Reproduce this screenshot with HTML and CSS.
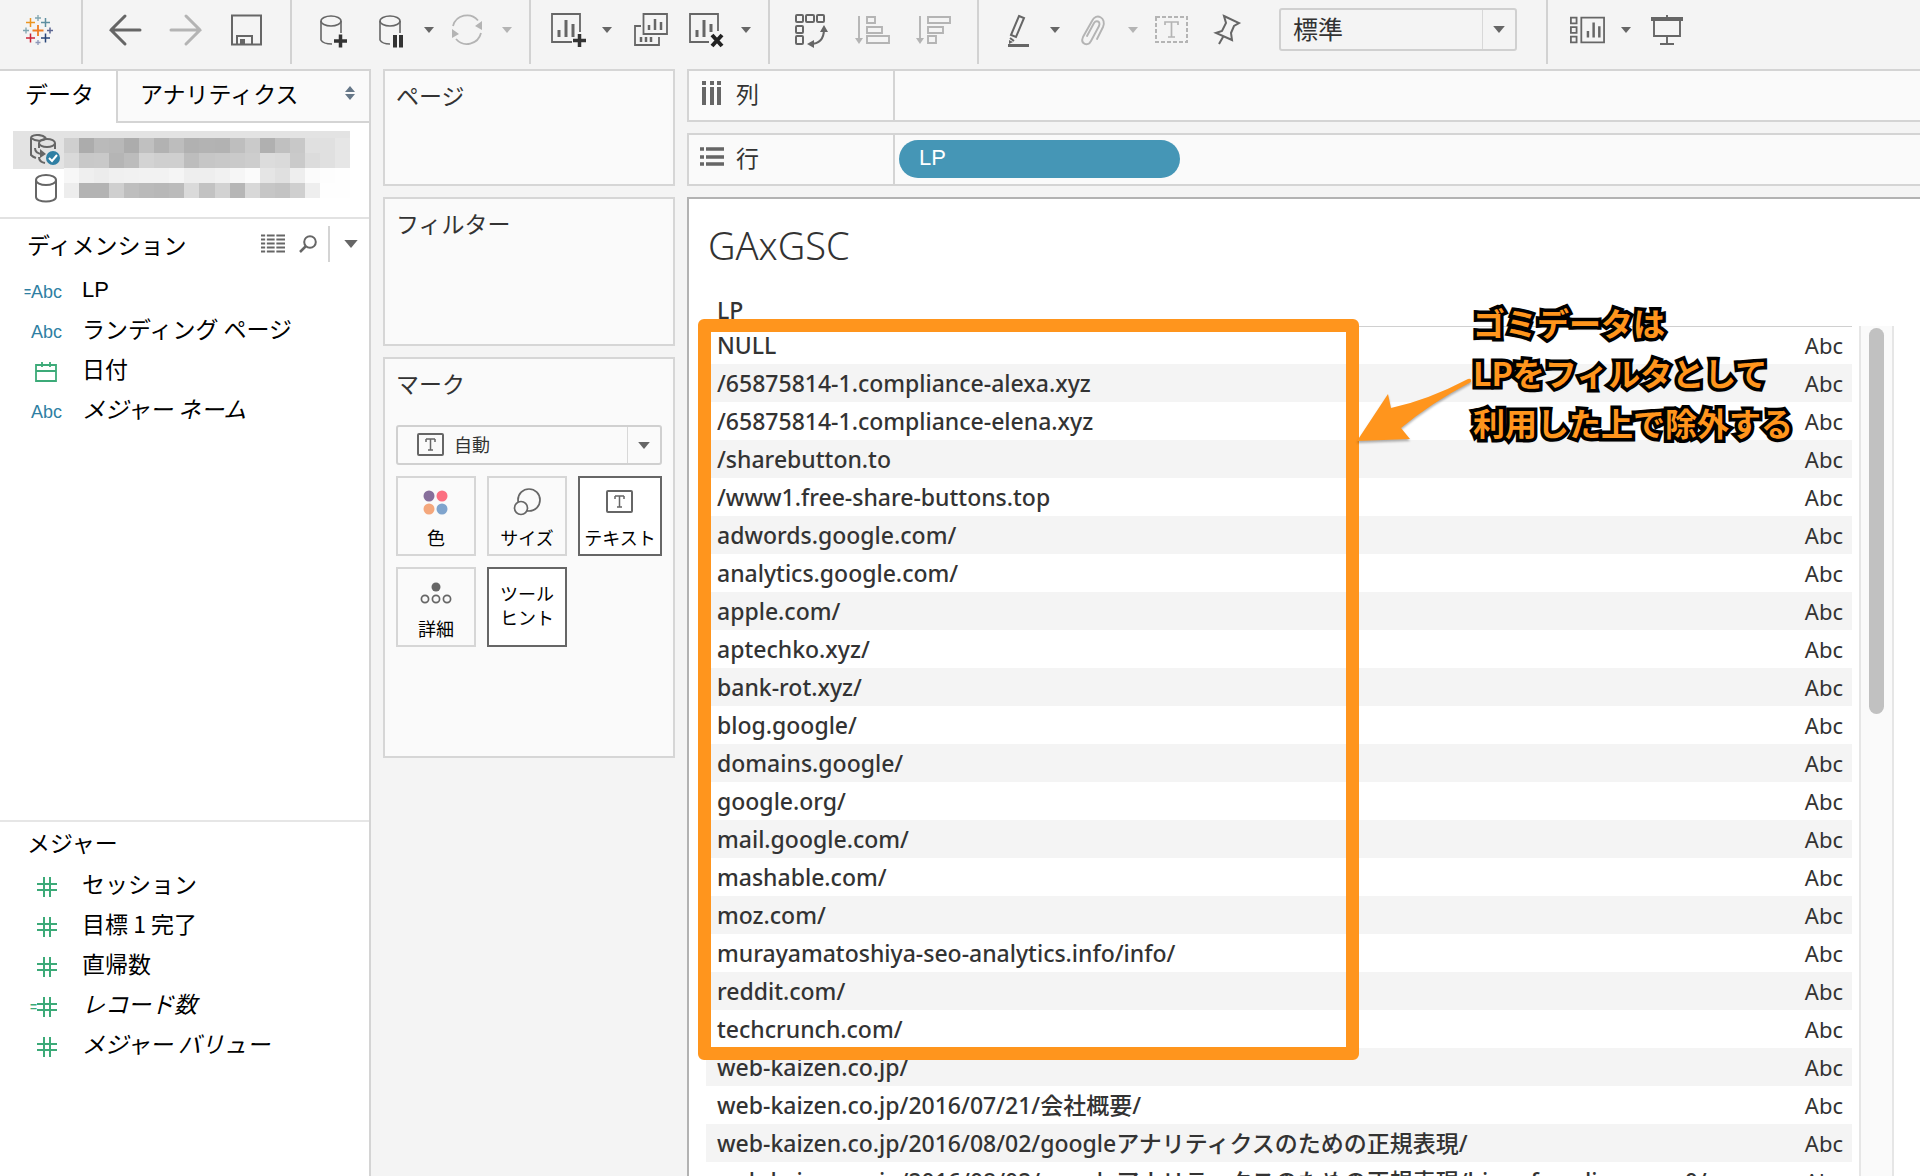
FILE: index.html
```html
<!DOCTYPE html>
<html lang="ja">
<head>
<meta charset="utf-8">
<title>GAxGSC</title>
<link rel="stylesheet" href="styles.css">
</head>
<body>
<svg class="sprite" aria-hidden="true">
  <symbol id="caret" viewBox="0 0 10 6"><path d="M0 0h10L5 6z" fill="currentColor"/></symbol>
  <symbol id="abc-t" viewBox="0 0 27 24"><rect x="1" y="1" width="25" height="21" rx="1" fill="none" stroke="currentColor" stroke-width="2"/><path d="M9 6h9M13.500 6v11M11 17h5M9 6v3M18 6v3" fill="none" stroke="currentColor" stroke-width="1.500"/></symbol>
  <symbol id="hash" viewBox="0 0 20 20"><path d="M7 0v20M13 0v20M0 7h20M0 13h20" fill="none" stroke="currentColor" stroke-width="2"/></symbol>
  <symbol id="cylinder" viewBox="0 0 22 29"><path d="M1 6v17c0 6 20 6 20 0V6" fill="none" stroke="currentColor" stroke-width="2"/><ellipse cx="11" cy="6" rx="10" ry="5" fill="none" stroke="currentColor" stroke-width="2"/></symbol>
</svg>

<header class="toolbar">
  <div class="group group-logo">
    <svg class="logo" viewBox="0 0 30 30" fill="none">
      <path d="M15 10v11M9.500 15.500h11" stroke="#ee7d23" stroke-width="1.800"/>
      <path d="M7.500 3v9M3 7.500h9" stroke="#eb9520" stroke-width="1.500"/>
      <path d="M22.500 3v9M18 7.500h9" stroke="#5d8ea0" stroke-width="1.500"/>
      <path d="M7.500 18.500v9M3 23h9" stroke="#cb2537" stroke-width="1.500"/>
      <path d="M22.500 18.500v9M18 23h9" stroke="#274579" stroke-width="1.500"/>
      <path d="M15 0v6M12 3h6M3 12.500v6M0 15.500h6" stroke="#7fa5b0" stroke-width="1.300"/>
      <path d="M27 12.500v6M24 15.500h6" stroke="#5c6692" stroke-width="1.500"/>
      <path d="M15 25v5M12.500 27.500h5" stroke="#8d97b8" stroke-width="1.300"/>
    </svg>
  </div>
  <div class="group group-history">
    <button class="tool" aria-label="元に戻す"><svg viewBox="0 0 36 36"><path d="M18 4L4 18l14 14M4 18h29" fill="none" stroke="currentColor" stroke-width="3" stroke-linecap="round"/></svg></button>
    <button class="tool off" aria-label="やり直し"><svg viewBox="0 0 36 36"><path d="M18 4l14 14-14 14M32 18H3" fill="none" stroke="currentColor" stroke-width="3" stroke-linecap="round"/></svg></button>
    <button class="tool" aria-label="保存"><svg viewBox="0 0 36 36"><path d="M3 3.500h29v29H3zM8 32v-8h15v8" fill="none" stroke="currentColor" stroke-width="2"/><path d="M11 27h5v5h-5z" fill="currentColor"/></svg></button>
  </div>
  <div class="group">
    <button class="tool" aria-label="新しいデータ ソース"><svg viewBox="0 0 36 36"><g fill="none" stroke="currentColor" stroke-width="1.600"><ellipse cx="14" cy="9" rx="10" ry="5"/><path d="M4 9v19q2 4 11 4M24 9v12"/></g><path d="M17 29h13M23.500 22.500v13" stroke="#333" stroke-width="3.500"/></svg></button>
    <button class="tool paired" aria-label="自動更新の一時停止"><svg viewBox="0 0 36 36"><g fill="none" stroke="currentColor" stroke-width="1.600"><ellipse cx="18" cy="9" rx="10" ry="5"/><path d="M8 9v19q2 4 10 4M28 9v12"/></g><path d="M23 23v12.500M29 23v12.500" stroke="#333" stroke-width="4"/></svg></button>
    <button class="menu" aria-label="自動更新メニュー"><svg><use href="#caret"/></svg></button>
    <button class="tool paired off" aria-label="更新"><svg viewBox="0 0 36 36"><g fill="none" stroke="currentColor" stroke-width="1.800"><path d="M3 14A14.500 14.500 0 0 1 28 8.500M31 21A14.500 14.500 0 0 1 6 27"/></g><path d="M32 9v9l-7-4zM2 17v9l7-4z" fill="currentColor"/></svg></button>
    <button class="menu off" aria-label="更新メニュー"><svg><use href="#caret"/></svg></button>
  </div>
  <div class="group">
    <button class="tool paired" aria-label="新しいワークシート"><svg viewBox="0 0 36 36"><path d="M30 20V2H2v28h20" fill="none" stroke="currentColor" stroke-width="1.800"/><path d="M9 18v7M16 8v17M23 12v13" stroke="currentColor" stroke-width="3"/><path d="M23 28.500h13M29.500 22v13" stroke="#333" stroke-width="3.500"/></svg></button>
    <button class="menu" aria-label="ワークシート メニュー"><svg><use href="#caret"/></svg></button>
    <button class="tool" aria-label="複製"><svg viewBox="2 0 36 36"><path d="M11.500 2H35v20H11.500zM9 14H3v19h24v-8" fill="none" stroke="currentColor" stroke-width="1.800"/><path d="M17 13v5M23 7v11M29 10v8M9 25v5M14 25v5M19 25v5" stroke="currentColor" stroke-width="2.500"/></svg></button>
    <button class="tool paired" aria-label="シートのクリア"><svg viewBox="0 0 36 36"><path d="M29 19V2H1v28h19" fill="none" stroke="currentColor" stroke-width="1.800"/><path d="M8 18v7M15 8v17M22 12v8" stroke="currentColor" stroke-width="3"/><path d="M23 23l10 11M33 23L23 34" stroke="#222" stroke-width="4"/></svg></button>
    <button class="menu" aria-label="クリア メニュー"><svg><use href="#caret"/></svg></button>
  </div>
  <div class="group group-sort">
    <button class="tool" aria-label="行と列の交換"><svg viewBox="0 0 36 36"><g fill="none" stroke="currentColor" stroke-width="2"><rect x="2" y="3" width="7" height="7" rx="1"/><rect x="12" y="3" width="8" height="7" rx="1"/><rect x="23" y="3" width="7" height="7" rx="1"/><rect x="2" y="14" width="7" height="7" rx="1"/><rect x="2" y="24" width="7" height="8" rx="1"/><path d="M30 17q0 15-14 15"/></g><path d="M26 20l4-7 4 7zM20 28l-7 4 7 4z" fill="currentColor"/></svg></button>
    <button class="tool off" aria-label="昇順で並べ替え"><svg viewBox="0 0 36 36"><path d="M4 4v24M12 5h8v6h-8zM12 15h15v6H12zM12 24h22v7H12z" fill="none" stroke="currentColor" stroke-width="1.900"/><path d="M0 26h8l-4 6z" fill="currentColor"/></svg></button>
    <button class="tool off" aria-label="降順で並べ替え"><svg viewBox="0 0 36 36"><path d="M4 4v24M12 5h22v6H12zM12 15h15v6H12zM12 24h8v7h-8z" fill="none" stroke="currentColor" stroke-width="1.900"/><path d="M0 26h8l-4 6z" fill="currentColor"/></svg></button>
  </div>
  <div class="group group-format">
    <button class="tool paired" aria-label="ハイライト"><svg viewBox="0 0 36 36"><path d="M21 4l5 2-8 19-5-2zM12 26l4 3" fill="none" stroke="currentColor" stroke-width="2"/><path d="M11 28l4 2-4 2z" fill="currentColor"/><path d="M10 33.500h21" stroke="currentColor" stroke-width="3"/></svg></button>
    <button class="menu" aria-label="ハイライト メニュー"><svg><use href="#caret"/></svg></button>
    <button class="tool paired off" aria-label="グループ"><svg viewBox="0 0 36 36"><path d="M21 27l6-12c4-9-7-15-11-6L7 25c-3 7 5 10 8 4l8-15c2-5-3-6-5-3l-7 13" fill="none" stroke="currentColor" stroke-width="1.900" stroke-linecap="round"/></svg></button>
    <button class="menu off" aria-label="グループ メニュー"><svg><use href="#caret"/></svg></button>
    <button class="tool paired off" aria-label="マーク ラベル"><svg viewBox="0 0 36 36"><rect x="2" y="5" width="31" height="25" fill="none" stroke="currentColor" stroke-width="2" stroke-dasharray="4 2"/><path d="M11 13v-3h13v3M17.500 10v15M14 25h7" fill="none" stroke="currentColor" stroke-width="1.700"/></svg></button>
    <button class="tool" aria-label="軸の固定"><svg viewBox="0 0 36 36"><path d="M14 4l15 7-5 3-3 7 1 7L6 21l6-2 4-8zM13 25L9 32" fill="none" stroke="currentColor" stroke-width="2"/></svg></button>
    <div class="select fit">
      <select aria-label="表示サイズ"><option>標準</option></select>
      <svg><use href="#caret"/></svg>
    </div>
  </div>
  <div class="group group-last">
    <button class="tool paired" aria-label="カードの表示"><svg viewBox="0 0 38 36"><path d="M2 5h6v6H2zM2 15h6v6H2zM2 25h6v6H2zM13 5h24v26H13z" fill="none" stroke="currentColor" stroke-width="1.900"/><path d="M20 19v7M26 10v16M32 14v12" stroke="currentColor" stroke-width="2.600"/></svg></button>
    <button class="menu" aria-label="カード メニュー"><svg><use href="#caret"/></svg></button>
    <button class="tool paired" aria-label="プレゼンテーション モード"><svg viewBox="0 0 36 36"><path d="M4 7h32" stroke="currentColor" stroke-width="4"/><path d="M7 8v16h26V8M20 3v4M20 24v9M13 32h14" fill="none" stroke="currentColor" stroke-width="1.900"/></svg></button>
  </div>
</header>

<div class="workspace">
  <aside class="data-pane">
    <nav class="tabs">
      <button class="tab active">データ</button>
      <button class="tab">アナリティクス
        <svg viewBox="0 0 10 14" class="updown"><path d="M0 6h10L5 0zM0 8h10l-5 6z" fill="currentColor"/></svg>
      </button>
    </nav>
    <div class="sources">
      <div class="source-icons">
        <svg class="source-linked" viewBox="0 0 32 32" fill="none"><path d="M17 4C12-1 2 1 2 4v17q2 2 5 3M17 4c-2 3-10 4-15 0" stroke="#666" stroke-width="2"/><ellipse cx="18" cy="9" rx="8" ry="4" stroke="#666" stroke-width="2"/><path d="M26 9v6M6 14q0 6 8 6M10 9v5M10 23q0 5 6 6" stroke="#666" stroke-width="2"/><path d="M11 15l6 5-6 4z" fill="#666"/><circle cx="24" cy="24" r="7" fill="#2f7fa3"/><path d="M20 24l3 3 5-6" stroke="#fff" stroke-width="2"/></svg>
        <svg class="source-plain"><use href="#cylinder"/></svg>
      </div>
      <div class="mosaic" id="mosaic"></div>
    </div>
    <section class="fields dimensions">
      <div class="fields-head">
        <h2>ディメンション</h2>
        <button class="mini" aria-label="データの表示"><svg width="24" height="20" viewBox="0 0 24 20"><path d="M0 1.500h24M0 5.500h24M0 9.500h24M0 13.500h24M0 17.500h24" stroke="#666" stroke-width="1.900"/><path d="M5 0v20M14.500 0v20" stroke="#fff" stroke-width="1.700"/></svg></button>
        <button class="mini" aria-label="検索"><svg width="18" height="18" viewBox="0 0 18 18"><circle cx="11" cy="7" r="5.800" fill="none" stroke="#666" stroke-width="2"/><path d="M7 11l-6 6" stroke="#666" stroke-width="2.500"/></svg></button>
        <button class="mini mini-menu" aria-label="メニュー"><svg width="14" height="8"><use href="#caret"/></svg></button>
      </div>
      <ul>
        <li><span class="kind"><small>=</small>Abc</span><span class="latin">LP</span></li>
        <li><span class="kind">Abc</span>ランディング ページ</li>
        <li><span class="kind green"><svg width="22" height="20" viewBox="0 0 22 20"><path d="M1 3h20v16H1zM1 9h20M7 0v5M15 0v5" fill="none" stroke="currentColor" stroke-width="1.800"/></svg></span>日付</li>
        <li><span class="kind">Abc</span><em>メジャー ネーム</em></li>
      </ul>
    </section>
    <section class="fields measures">
      <div class="fields-head"><h2>メジャー</h2></div>
      <ul>
        <li><span class="kind green"><svg class="hash"><use href="#hash"/></svg></span>セッション</li>
        <li><span class="kind green"><svg class="hash"><use href="#hash"/></svg></span>目標 1 完了</li>
        <li><span class="kind green"><svg class="hash"><use href="#hash"/></svg></span>直帰数</li>
        <li><span class="kind green"><small>=</small><svg class="hash"><use href="#hash"/></svg></span><em>レコード数</em></li>
        <li><span class="kind green"><svg class="hash"><use href="#hash"/></svg></span><em>メジャー バリュー</em></li>
      </ul>
    </section>
  </aside>

  <div class="cards">
    <section class="card pages"><h2>ページ</h2></section>
    <section class="card filters"><h2>フィルター</h2></section>
    <section class="card marks">
      <h2>マーク</h2>
      <div class="select mark-type">
        <svg class="mark-icon"><use href="#abc-t"/></svg>
        <select aria-label="マーク タイプ"><option>自動</option></select>
        <svg><use href="#caret"/></svg>
      </div>
      <div class="mark-grid">
        <button class="mark"><svg viewBox="0 0 32 30"><circle cx="9" cy="9" r="5.500" fill="#876f9b"/><circle cx="22" cy="9" r="5.500" fill="#fb7081"/><circle cx="9" cy="22" r="5.500" fill="#f4a77c"/><circle cx="22" cy="22" r="5.500" fill="#7fa4cd"/></svg>色</button>
        <button class="mark"><svg viewBox="0 0 32 30"><g fill="#fafafa" stroke="#666" stroke-width="1.700"><circle cx="18" cy="13" r="11"/><circle cx="10" cy="21" r="6.500"/></g></svg>サイズ</button>
        <button class="mark used"><svg viewBox="-2 -3 32 30" color="#666"><use href="#abc-t" width="27" height="24"/></svg>テキスト</button>
        <button class="mark"><svg viewBox="0 0 32 30"><circle cx="16" cy="9" r="4.500" fill="#666"/><g fill="none" stroke="#666" stroke-width="1.700"><circle cx="5" cy="21" r="3.600"/><circle cx="16" cy="21" r="3.600"/><circle cx="27" cy="21" r="3.600"/></g></svg>詳細</button>
        <button class="mark used text-only">ツール<br>ヒント</button>
      </div>
    </section>
  </div>

  <main class="sheet">
    <div class="shelf">
      <h2><svg viewBox="0 0 24 24"><path d="M4 6v18M12 6v18M19 6v18M4 0v4M12 0v4M19 0v4" stroke="#666" stroke-width="4"/></svg>列</h2>
      <div class="drop"></div>
    </div>
    <div class="shelf">
      <h2><svg viewBox="0 0 24 24"><path d="M0 4h4M6 4h18M0 12h4M6 12h18M0 19h4M6 19h18" stroke="#666" stroke-width="3.500"/></svg>行</h2>
      <div class="drop"><button class="pill latin">LP</button></div>
    </div>
    <div class="view">
      <h1>GAxGSC</h1>
      <div class="view-body">
        <table>
          <thead><tr><th scope="col">LP</th><th aria-label="値"></th></tr></thead>
          <tbody>
            <tr><td>NULL</td><td>Abc</td></tr>
            <tr><td>/65875814-1.compliance-alexa.xyz</td><td>Abc</td></tr>
            <tr><td>/65875814-1.compliance-elena.xyz</td><td>Abc</td></tr>
            <tr><td>/sharebutton.to</td><td>Abc</td></tr>
            <tr><td>/www1.free-share-buttons.top</td><td>Abc</td></tr>
            <tr><td>adwords.google.com/</td><td>Abc</td></tr>
            <tr><td>analytics.google.com/</td><td>Abc</td></tr>
            <tr><td>apple.com/</td><td>Abc</td></tr>
            <tr><td>aptechko.xyz/</td><td>Abc</td></tr>
            <tr><td>bank-rot.xyz/</td><td>Abc</td></tr>
            <tr><td>blog.google/</td><td>Abc</td></tr>
            <tr><td>domains.google/</td><td>Abc</td></tr>
            <tr><td>google.org/</td><td>Abc</td></tr>
            <tr><td>mail.google.com/</td><td>Abc</td></tr>
            <tr><td>mashable.com/</td><td>Abc</td></tr>
            <tr><td>moz.com/</td><td>Abc</td></tr>
            <tr><td>murayamatoshiya-seo-analytics.info/info/</td><td>Abc</td></tr>
            <tr><td>reddit.com/</td><td>Abc</td></tr>
            <tr><td>techcrunch.com/</td><td>Abc</td></tr>
            <tr><td>web-kaizen.co.jp/</td><td>Abc</td></tr>
            <tr><td>web-kaizen.co.jp/2016/07/21/会社概要/</td><td>Abc</td></tr>
            <tr><td>web-kaizen.co.jp/2016/08/02/googleアナリティクスのための正規表現/</td><td>Abc</td></tr>
            <tr><td>web-kaizen.co.jp/2016/08/02/googleアナリティクスのための正規表現/hime-forudisavows-0/</td><td>Abc</td></tr>
          </tbody>
        </table>
        <div class="scrollbar"><div class="thumb"></div></div>
      </div>
      <div class="frame"></div>
      <svg class="arrow" viewBox="0 0 116 64"><path d="M1 63L32 16l3 14Q72 22 112 1q4-1 3 3Q75 25 45 50l9 11z" fill="#ff951d"/></svg>
      <p class="note">ゴミデータは<br>LPをフィルタとして<br>利用した上で除外する</p>
    </div>
  </main>
</div>
<script src="mosaic.js"></script>
</body>
</html>
```
FILE: styles.css
```css
* { box-sizing: border-box; }

body {
  margin: 0;
  height: 100vh;
  display: flex;
  flex-direction: column;
  overflow: hidden;
  background: #f4f4f4;
  color: #000;
  font: 23px/32px "Noto Sans CJK JP", sans-serif;
}

h1, h2, ul, p { margin: 0; padding: 0; font-weight: 400; }
h2 { font-size: 23px; line-height: 32px; }
ul { list-style: none; }
svg { display: block; flex: none; }
button, select { font: inherit; color: inherit; background: none; border: 0; padding: 0; margin: 0; }
.sprite { position: absolute; width: 0; height: 0; }
.latin { font-family: "Liberation Sans", sans-serif; font-size: 22px; }

/* Toolbar */
.toolbar {
  display: flex;
  flex: none;
  height: 69px;
  padding-bottom: 5px;
  color: #666;
}
.group {
  display: flex;
  align-items: center;
  padding: 0 8px 4px 12px;
  border-right: 2px solid #d2d2d2;
}
.group-logo { width: 83px; padding: 0 6px 4px 0; justify-content: center; }
.group-history, .group-sort { padding: 0 13px 4px 11px; }
.group-format { padding: 0 29px 4px 12px; }
.group-last { border-right: 0; padding-left: 14px; }
.logo { width: 30px; height: 30px; }
.tool { width: 61px; height: 44px; display: flex; align-items: center; justify-content: center; }
.tool svg { width: 36px; height: 36px; }
.tool.paired { width: 50px; }
.menu { width: 28px; height: 44px; display: flex; align-items: center; justify-content: center; }
.menu svg { width: 10px; height: 6px; }
.off { color: #b4b4b4; }

.select {
  display: flex;
  align-items: center;
  border: 2px solid #d0d0d0;
  border-radius: 3px;
  color: #666;
}
.select select {
  flex: 1;
  align-self: stretch;
  appearance: none;
  color: #333;
  border-right: 1px solid #d8d8d8;
  padding-bottom: 3px;
}
.select > svg:last-child { width: 12px; height: 7px; margin: 0 10px; }
.fit { width: 238px; height: 43px; margin: 0 0 2px 21px; font-size: 25px; }
.fit select { padding-left: 12px; }

/* Columns */
.workspace { display: flex; flex: 1; min-height: 0; }

.data-pane {
  width: 371px;
  flex: none;
  display: flex;
  flex-direction: column;
  background: #fff;
  border-top: 2px solid #d4d4d4;
  border-right: 2px solid #d4d4d4;
}
.tabs { display: flex; height: 52px; flex: none; }
.tab { width: 116px; padding: 0 0 8px 3px; }
.tab + .tab {
  flex: 1;
  display: flex;
  align-items: center;
  justify-content: space-between;
  padding: 0 14px 6px 22px;
  background: #fafafa;
  border-left: 2px solid #d4d4d4;
  border-bottom: 2px solid #d4d4d4;
}
.updown { width: 10px; height: 14px; color: #667788; }

.sources {
  display: flex;
  height: 96px;
  flex: none;
  padding: 8px 19px 0 13px;
  border-bottom: 2px solid #e2e2e2;
}
.source-icons { width: 51px; flex: none; }
.source-linked { width: 51px; height: 38px; padding: 3px 2px 3px 15px; background: #e3e3e3; }
.source-plain { width: 22px; height: 29px; margin: 5px 0 0 22px; color: #666; }
.mosaic {
  flex: 1;
  display: grid;
  grid-template-columns: repeat(19, 1fr);
  grid-template-rows: repeat(4, 15px);
  height: 68px;
  border-top: 7px solid #e3e3e3;
}

.fields { border-bottom: 2px solid #e6e6e6; }
.dimensions { flex: 17 1 0; }
.measures { flex: 10 1 0; border-bottom: 0; }
.fields-head { display: flex; align-items: center; height: 52px; padding: 0 11px 2px 27px; }
.measures .fields-head { height: 44px; padding-bottom: 4px; }
.fields-head h2 { flex: 1; }
.mini { padding: 0 7px; }
.mini-menu { margin-left: 4px; padding: 14px 0 14px 14px; border-left: 2px solid #d4d4d4; color: #666; }
.fields li { display: flex; align-items: center; height: 40px; padding-bottom: 6px; white-space: pre; }
.fields .latin { padding-top: 4px; }
.kind {
  display: flex;
  align-items: center;
  justify-content: flex-end;
  width: 62px;
  margin-right: 20px;
  padding-top: 8px;
  color: #2f7fa3;
  font: 18px/24px "Liberation Sans", sans-serif;
}
.kind small { font-size: 12px; font-weight: 700; }
.green { color: #3caa78; padding-right: 5px; }
.hash { width: 20px; height: 20px; }

.cards {
  display: flex;
  flex-direction: column;
  gap: 11px;
  width: 292px;
  flex: none;
  margin: 0 12px 0 12px;
}
.card { padding: 8px 11px; background: #fafafa; border: 2px solid #d6d6d6; color: #333; }
.pages { height: 117px; }
.filters { height: 149px; }
.marks { height: 401px; }
.mark-type { height: 40px; margin-top: 26px; font-size: 18px; }
.mark-type select { padding-left: 10px; }
.mark-icon { width: 27px; height: 24px; margin-left: 19px; }
.mark-grid { display: grid; grid-template-columns: 80px 80px auto; gap: 11px; margin-top: 11px; }
.mark {
  display: flex;
  flex-direction: column;
  align-items: center;
  justify-content: center;
  height: 80px;
  border: 2px solid #d6d6d6;
  color: #000;
  font-size: 18px;
  line-height: 24px;
  white-space: nowrap;
}
.mark svg { width: 32px; height: 30px; margin: 4px 0 8px; }
.mark.used { background: #fff; border-color: #666; }
.text-only { padding-bottom: 4px; }

.sheet { flex: 1; min-width: 0; display: flex; flex-direction: column; gap: 11px; }
.shelf { display: flex; height: 53px; flex: none; background: #fafafa; border: 2px solid #d4d4d4; border-right: 0; color: #333; }
.shelf h2 { display: flex; align-items: center; gap: 12px; width: 206px; padding-left: 11px; padding-bottom: 5px; border-right: 2px solid #d4d4d4; }
.shelf h2 svg { width: 24px; height: 24px; }
.drop { display: flex; align-items: center; padding: 0 0 1px 4px; }
.pill { width: 281px; height: 38px; padding: 0 0 2px 20px; border-radius: 19px; background: #4596b6; color: #fff; text-align: left; }

/* View */
.view {
  position: relative;
  flex: 1;
  min-height: 0;
  overflow: hidden;
  background: #fff;
  border: solid #b2b2b2;
  border-width: 2px 0 0 2px;
  color: #333;
}
.view h1 { padding: 19px 0 0 19px; font: 300 38px/54px "Noto Sans", sans-serif; }
.view-body { display: flex; padding: 18px 26px 0 17px; }
table { flex: 1; border-collapse: collapse; font: 23px/28px "Noto Sans", "Noto Sans CJK JP", sans-serif; }
th { height: 36px; padding: 5px 0 0 11px; text-align: left; font-weight: 500; line-height: 30px; }
td { height: 38px; padding: 0 0 0 11px; white-space: nowrap; font-weight: 500; }
thead { border-bottom: 1px solid #d0d0d0; }
th:last-child, td:last-child { width: 60px; padding: 0 9px 0 0; text-align: right; font-size: 22px; font-weight: 400; }
tbody tr:nth-child(even) { background: #f4f4f4; }
.scrollbar { width: 35px; margin: 36px 0 0 7px; padding-top: 2px; background: #fafafa; border: solid #e6e6e6; border-width: 0 2px; }
.thumb { width: 15px; height: 386px; margin: 0 auto; border-radius: 8px; background: #c1c1c1; }

/* Annotation laid over the view */
.frame { position: absolute; left: 9px; top: 120px; width: 661px; height: 741px; border: 13px solid #ff951d; border-radius: 6px; }
.arrow { position: absolute; left: 667px; top: 179px; width: 116px; height: 64px; filter: drop-shadow(0 2px 1px rgba(0, 0, 0, .3)); }
.note {
  position: absolute;
  left: 784px;
  top: 98px;
  color: #ff951d;
  font-size: 32px;
  line-height: 50px;
  font-weight: 700;
  white-space: nowrap;
  -webkit-text-stroke: 7px #000;
  paint-order: stroke fill;
  text-shadow: 0 2px 3px rgba(0, 0, 0, .5);
}
```
FILE: mosaic.js
```js
// Masked data source names: one grey level per cell.
const rows = [
  "cf ac ba b8 ac c0 b2 bd b1 b3 b2 be ca b0 c0 c8 e0 e0 e6",
  "d9 c8 c9 b5 bc d3 cf cf bd c6 c8 ca cd dc da ca dc e0 e6",
  "f7 ef ec f0 f1 f2 f2 f5 ee ee f1 f6 fb e5 e0 ee fb fd fe",
  "ed b3 b3 cf be ba b8 bb da c2 d2 b6 d8 c6 c3 cf ee fe fe"
];
const mosaic = document.getElementById("mosaic");
for (const level of rows.join(" ").split(" ")) {
  const cell = document.createElement("i");
  cell.style.background = "#" + level.repeat(3);
  mosaic.append(cell);
}
```
